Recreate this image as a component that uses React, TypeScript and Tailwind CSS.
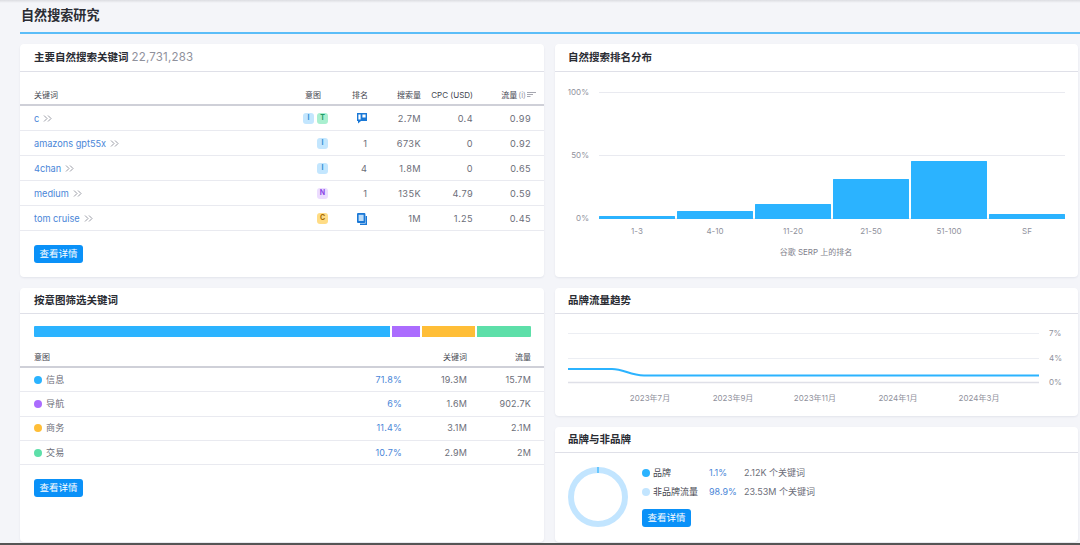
const font = "font-['Inter','Noto_Sans_CJK_SC',sans-serif]";

const keywords = [
  { name: "c", intents: ["I", "T"], rank: "bubble", volume: "2.7M", cpc: "0.4", traffic: "0.99" },
  { name: "amazons gpt55x", intents: ["I"], rank: "1", volume: "673K", cpc: "0", traffic: "0.92" },
  { name: "4chan", intents: ["I"], rank: "4", volume: "1.8M", cpc: "0", traffic: "0.65" },
  { name: "medium", intents: ["N"], rank: "1", volume: "135K", cpc: "4.79", traffic: "0.59" },
  { name: "tom cruise", intents: ["C"], rank: "doc", volume: "1M", cpc: "1.25", traffic: "0.45" },
];

const intentRows = [
  { label: "信息", dot: "bg-[#2bb3ff]", share: "71.8%", keywords: "19.3M", traffic: "15.7M" },
  { label: "导航", dot: "bg-[#ab6cfe]", share: "6%", keywords: "1.6M", traffic: "902.7K" },
  { label: "商务", dot: "bg-[#ffbe37]", share: "11.4%", keywords: "3.1M", traffic: "2.1M" },
  { label: "交易", dot: "bg-[#5ddfa9]", share: "10.7%", keywords: "2.9M", traffic: "2M" },
];

const bars = [
  { label: "1-3", top: 216 },
  { label: "4-10", top: 211 },
  { label: "11-20", top: 204 },
  { label: "21-50", top: 179 },
  { label: "51-100", top: 161 },
  { label: "SF", top: 214 },
];

function Card({ title, extra, tall, right, className, children }: { title: string; extra?: string; tall?: boolean; right?: boolean; className?: string; children: React.ReactNode }) {
  return (
    <section className={`flex flex-col rounded-[4px] bg-white shadow-[0_1px_2px_rgba(30,40,80,0.08)] ${className ?? ""}`}>
      <header className={`flex shrink-0 items-center border-b border-[#dfe0e8] ${right ? "pl-[13px]" : "pl-[14px]"} ${tall ? "h-[28px]" : "h-[26px]"}`}>
        <h2 className="text-[10.5px] font-semibold text-[#2a2c33]">{title}</h2>
        {extra && <span className="ml-[3px] text-[11.5px] tracking-[0.2px] text-[#8f919c]">{extra}</span>}
      </header>
      {children}
    </section>
  );
}

function DetailsButton() {
  return (
    <button className="flex h-[18px] w-[49px] items-center justify-center rounded-[3px] bg-[#0a91f8] text-[9.5px] text-white">
      查看详情
    </button>
  );
}

function IntentBadge({ code }: { code: string }) {
  const color =
    code === "I" ? "bg-[#c3e6fe] text-[#2f8fd3]"
    : code === "T" ? "bg-[#a9efcf] text-[#1f9a68]"
    : code === "N" ? "bg-[#ecdcff] text-[#8a45e6]"
    : "bg-[#ffdc85] text-[#a56a00]";
  return (
    <span className={`flex h-[11px] w-[11px] items-center justify-center rounded-[3px] text-[7px] font-bold ${color}`}>{code}</span>
  );
}

function RankCell({ rank }: { rank: string }) {
  if (rank === "bubble") {
    return (
      <svg width="10" height="11" viewBox="0 0 10 11">
        <path fill="#1a78d6" fillRule="evenodd" d="M0 0h10v8H4l-3 2.6V8H0zM1.4 1.4v5.2h2.2V1.4zM5.4 1.4v3.2h3.2V1.4z" />
      </svg>
    );
  }
  if (rank === "doc") {
    return (
      <svg width="10" height="12" viewBox="0 0 10 12">
        <rect x="0" y="0" width="8.4" height="10" rx="1" fill="#1a78d6" />
        <rect x="1.6" y="1.8" width="5" height="6.2" fill="#bcdcf8" />
        <path d="M9.3 3v8.3H3" fill="none" stroke="#1a78d6" strokeWidth="1.4" />
      </svg>
    );
  }
  return <>{rank}</>;
}

function RankingChart() {
  return (
    <svg width="523" height="205" viewBox="555 72 523 205" className="block text-[8px]">
      {[92, 155, 218].map((y) => (
        <line key={y} x1="599" x2="1065" y1={y + 0.5} y2={y + 0.5} stroke="#e9eaf0" />
      ))}
      {[["100%", 92], ["50%", 155], ["0%", 218]].map(([t, y]) => (
        <text key={t} x="589" y={Number(y) + 3} textAnchor="end" fill="#8f919c">{t}</text>
      ))}
      {bars.map((b, i) => {
        const x = 599 + i * 78;
        return (
          <g key={b.label}>
            <rect x={x} y={b.top} width="76" height={219 - b.top} rx="0.5" fill="#2bb3ff" />
            <text x={x + 38} y="234" textAnchor="middle" fill="#8f919c">{b.label}</text>
          </g>
        );
      })}
      <text x="816" y="255" textAnchor="middle" fill="#7f818c">谷歌 SERP 上的排名</text>
    </svg>
  );
}

function TrendChart() {
  return (
    <svg width="523" height="102" viewBox="555 314 523 102" className="block text-[8px]">
      {[[333, "7%"], [358, "4%"]].map(([y, t]) => (
        <g key={t}>
          <line x1="568" x2="1039" y1={Number(y) + 0.5} y2={Number(y) + 0.5} stroke="#eceef3" />
          <text x="1049" y={Number(y) + 3} fill="#8f919c">{t}</text>
        </g>
      ))}
      <line x1="568" x2="1039" y1="382.5" y2="382.5" stroke="#dfe0e8" strokeWidth="1.5" />
      <text x="1049" y="385" fill="#8f919c">0%</text>
      <path d="M568 369H612C624 369 630 375.5 644 375.5H1039" fill="none" stroke="#2bb3ff" strokeWidth="2" />
      {[["2023年7月", 650], ["2023年9月", 733], ["2023年11月", 815], ["2024年1月", 898], ["2024年3月", 979]].map(([t, x]) => (
        <text key={t} x={x} y="401" textAnchor="middle" fill="#8f919c">{t}</text>
      ))}
    </svg>
  );
}

function Donut() {
  return (
    <svg width="60" height="60" viewBox="0 0 60 60" className="mt-[4px] shrink-0">
      <circle cx="30" cy="30" r="27" fill="none" stroke="#c2e5ff" strokeWidth="6" />
      <path d="M30 0v6" stroke="#2bb3ff" strokeWidth="1.2" />
    </svg>
  );
}

export default function App() {
  return (
    <div className={`${font} flex h-[545px] w-[1080px] flex-col overflow-hidden bg-[#f4f5f9] text-[9px] text-[#6c6e79]`}>
      <div className="h-[3px] shrink-0 bg-gradient-to-b from-[#dcdde2] to-[#f4f5f9]" />
      <div className="ml-5 flex h-[31px] shrink-0 items-center border-b-2 border-[#5bbdf8] pb-[4px] pl-px">
        <h1 className="text-[13.1px] font-semibold text-[#2a2c33]">自然搜索研究</h1>
      </div>
      <main className="ml-5 mt-[10px] grid min-h-0 flex-1 grid-cols-[524px_523px] grid-rows-[233px_254px] gap-x-[11px] gap-y-[11px]">
        <Card title="主要自然搜索关键词" extra="22,731,283" tall>
          <div className="flex h-[34px] shrink-0 items-end border-b-2 border-[#cfd0d8] pb-[3px] pl-[14px] pr-[8px] text-[8px] text-[#44464f]">
            <span className="flex-1">关键词</span>
            <span className="w-[32px] text-right">意图</span>
            <span className="w-[47px] text-right">排名</span>
            <span className="w-[53px] text-right">搜索量</span>
            <span className="w-[52px] text-right">CPC (USD)</span>
            <span className="flex w-[63px] items-center justify-end gap-[1px]">
              流量
              <span className="text-[#9a9ca6]">(i)</span>
              <svg width="9" height="6" viewBox="0 0 9 6"><path d="M0 .5h9M0 2.5h6M0 4.5h3.5" stroke="#8f919c" strokeWidth=".8" /></svg>
            </span>
          </div>
          {keywords.map((k) => (
            <div key={k.name} className="flex h-[25px] shrink-0 items-center border-b border-[#e9eaf0] pl-[14px] pr-[13px] pt-px text-[9.2px]">
              <span className="flex flex-1 items-center gap-[4px] text-[#4a86d8]">
                {k.name}
                <svg width="9" height="7" viewBox="0 0 9 7" fill="none" stroke="#9a9ca6"><path d="M1 .5l3 3-3 3M5 .5l3 3-3 3" /></svg>
              </span>
              <span className="flex w-[39px] justify-end gap-[3px]">
                {k.intents.map((code) => <IntentBadge key={code} code={code} />)}
              </span>
              <span className="flex w-[39px] justify-end"><RankCell rank={k.rank} /></span>
              <span className="w-[54px] text-right tracking-[0.4px]">{k.volume}</span>
              <span className="w-[52px] text-right tracking-[0.4px]">{k.cpc}</span>
              <span className="w-[58px] text-right tracking-[0.4px]">{k.traffic}</span>
            </div>
          ))}
          <div className="pl-[14px] pt-[14px]"><DetailsButton /></div>
        </Card>

        <Card title="自然搜索排名分布" tall right>
          <RankingChart />
        </Card>

        <Card title="按意图筛选关键词">
          <div className="ml-[14px] mr-[13px] mt-[12px] flex h-[11px] shrink-0 gap-[1.5px]">
            <div className="w-[356px] rounded-l-[1px] bg-[#2bb3ff]" />
            <div className="w-[28.5px] bg-[#ab6cfe]" />
            <div className="w-[53.5px] bg-[#ffbe37]" />
            <div className="flex-1 rounded-r-[1px] bg-[#5ddfa9]" />
          </div>
          <div className="flex h-[31px] shrink-0 items-end border-b-2 border-[#cfd0d8] pb-[3px] pl-[14px] pr-[13px] text-[8px] text-[#44464f]">
            <span className="flex-1">意图</span>
            <span className="w-[65px] text-right">关键词</span>
            <span className="w-[64px] text-right">流量</span>
          </div>
          {intentRows.map((r) => (
            <div key={r.label} className="flex h-[24.3px] shrink-0 items-center border-b border-[#e9eaf0] pl-[14px] pr-[13px] tracking-[0.2px]">
              <span className={`h-[8px] w-[8px] rounded-full ${r.dot}`} />
              <span className="ml-[4px] flex-1">{r.label}</span>
              <span className="text-[#4a86d8]">{r.share}</span>
              <span className="w-[65px] text-right">{r.keywords}</span>
              <span className="w-[64px] text-right">{r.traffic}</span>
            </div>
          ))}
          <div className="pl-[14px] pt-[14px]"><DetailsButton /></div>
        </Card>

        <div className="flex min-h-0 flex-col gap-[11px]">
          <Card title="品牌流量趋势" right className="h-[128px] shrink-0">
            <TrendChart />
          </Card>
          <Card title="品牌与非品牌" right className="min-h-0 flex-1">
            <div className="flex gap-[14px] pl-[13px] pt-[10px]">
              <Donut />
              <div className="flex flex-col">
                <div className="flex h-[19px] items-center">
                  <span className="h-[8px] w-[8px] rounded-full bg-[#2bb3ff]" />
                  <span className="ml-[3px] w-[56px] text-[#44464f]">品牌</span>
                  <span className="w-[35px] text-[#4a86d8]">1.1%</span>
                  <span>2.12K 个关键词</span>
                </div>
                <div className="flex h-[19px] items-center">
                  <span className="h-[8px] w-[8px] rounded-full bg-[#c2e5ff]" />
                  <span className="ml-[3px] w-[56px] text-[#44464f]">非品牌流量</span>
                  <span className="w-[35px] text-[#4a86d8]">98.9%</span>
                  <span>23.53M 个关键词</span>
                </div>
                <div className="mt-[8px]"><DetailsButton /></div>
              </div>
            </div>
          </Card>
        </div>
      </main>
      <div className="h-[2px] shrink-0 bg-[#555]" />
    </div>
  );
}
